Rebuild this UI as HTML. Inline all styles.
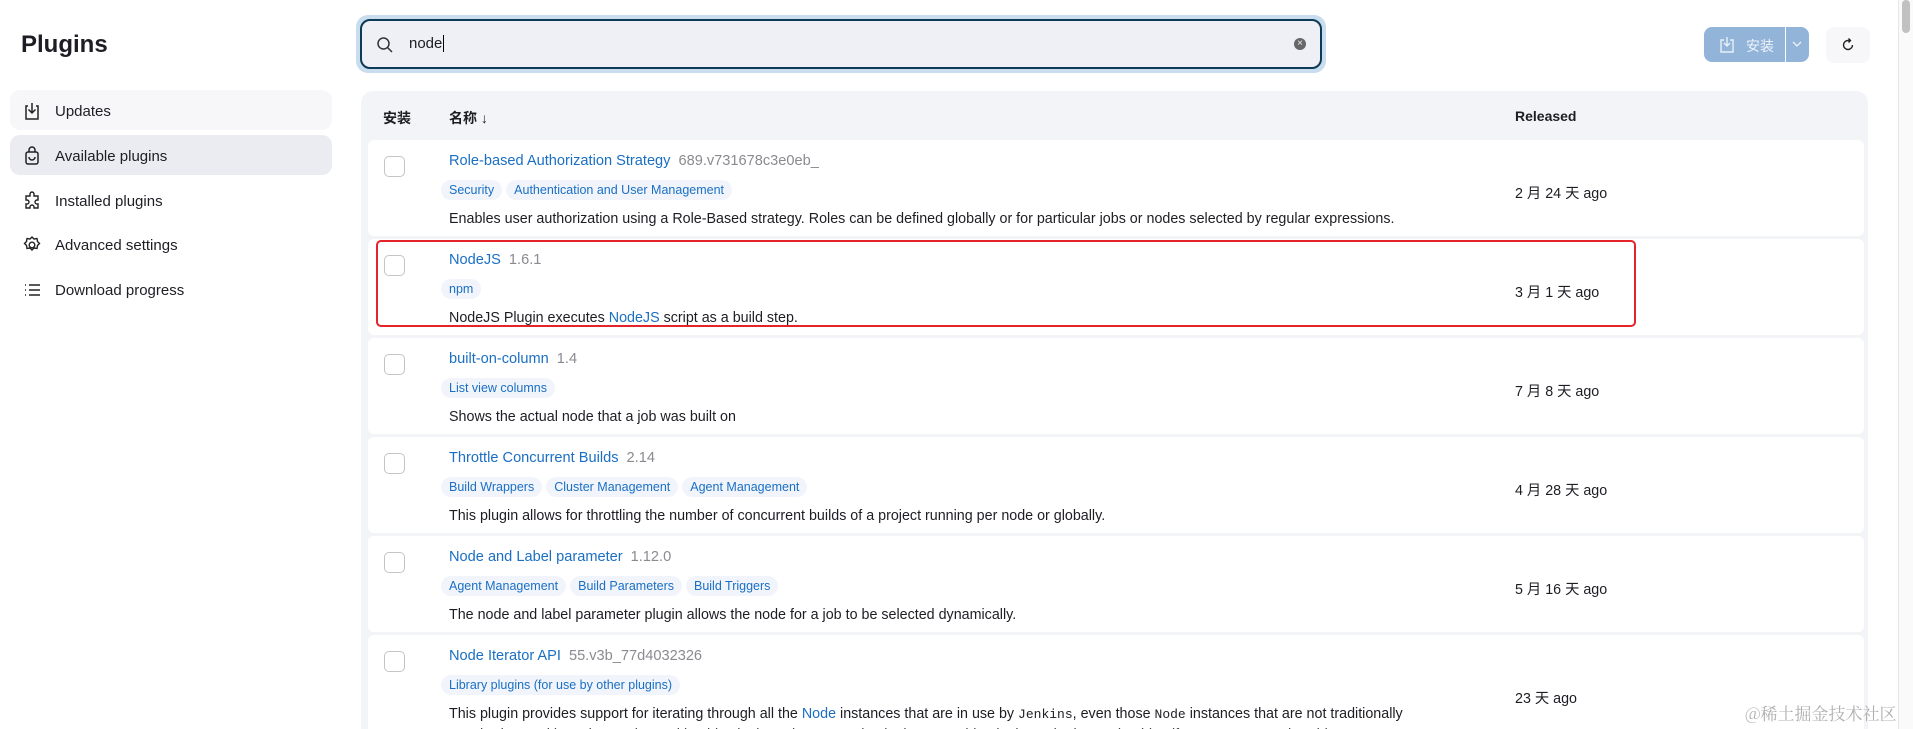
<!DOCTYPE html>
<html style="width:1913px;height:729px;overflow:hidden"><head><meta charset="utf-8"><style>
*{box-sizing:border-box;margin:0;padding:0}
body{width:1913px;height:729px;overflow:hidden;background:#fff;font-family:"Liberation Sans","Noto Sans CJK SC",sans-serif;color:#1d1d24;position:relative}
.a{position:absolute;white-space:nowrap}
.side{position:absolute;left:10px;width:322px;height:40px;border-radius:10px;font-size:15px;line-height:43px;padding-left:45px}
.side svg{position:absolute;left:12px;top:11px}
.row{position:absolute;left:368px;width:1496px;height:96px;background:#fff;border-radius:6px}
.cb{position:absolute;left:16px;width:21px;height:21px;border:1.6px solid #c4c4c8;border-radius:5px;background:#fff}
.t{position:absolute;left:81px;font-size:14.6px;color:#1a6fc4;white-space:nowrap}
.t span{color:#8a8a90;margin-left:8px}
.tags{position:absolute;left:73px;white-space:nowrap}
.tag{display:inline-block;font-size:12.5px;color:#1a6fc4;background:#f1f5fb;border-radius:12px;padding:3px 8px;margin-right:4px}
.d{position:absolute;left:81px;font-size:14.3px;white-space:nowrap}
.d b{font-weight:normal;color:#1a6fc4}
.r{position:absolute;left:1147px;font-size:14.3px;white-space:nowrap}
code{font-family:"Liberation Mono",monospace;font-size:13px}
</style></head><body>
<div class="a" style="left:21px;top:31px;font-size:24px;font-weight:bold">Plugins</div>

<div class="side" style="top:90px;background:#f7f7f9"><svg width="20" height="20" viewBox="0 0 20 20" fill="none" stroke="#222" stroke-width="1.5"><path d="M6 5H4v13h12V5h-2"/><path d="M10 2v10M6.5 8.5 10 12l3.5-3.5"/></svg>Updates</div>
<div class="side" style="top:135px;background:#ebecf1"><svg width="20" height="20" viewBox="0 0 20 20" fill="none" stroke="#222" stroke-width="1.5"><rect x="4" y="6" width="12" height="12" rx="2"/><path d="M7 6V4a3 3 0 0 1 6 0v2M7 11a3 3 0 0 0 6 0"/></svg>Available plugins</div>
<div class="side" style="top:180px"><svg width="20" height="20" viewBox="0 0 20 20" fill="none" stroke="#222" stroke-width="1.4"><path d="M8 3a2 2 0 0 1 4 0v2h4v4h-1a2 2 0 0 0 0 4h1v4h-4v-1a2 2 0 0 0-4 0v1H4v-4h1a2 2 0 0 0 0-4H4V5h4z"/></svg>Installed plugins</div>
<div class="side" style="top:224px"><svg width="20" height="20" viewBox="0 0 20 20" fill="none" stroke="#222" stroke-width="1.4"><path d="M10 2l2 2 3-.5.5 3 2 2-2 2-.5 3-3-.5-2 2-2-2-3 .5-.5-3-2-2 2-2 .5-3 3 .5z"/><circle cx="10" cy="10" r="2.8"/></svg>Advanced settings</div>
<div class="side" style="top:269px"><svg width="20" height="20" viewBox="0 0 20 20" fill="none" stroke="#222" stroke-width="1.5"><path d="M7 5h11M7 10h11M7 15h11M3 5h1M3 10h1M3 15h1"/></svg>Download progress</div>

<div class="a" style="left:356px;top:15px;width:970px;height:58px;border-radius:12px;background:#c9ddef"></div>
<div class="a" style="left:360px;top:19px;width:962px;height:50px;border-radius:10px;border:2.5px solid #0d3a55;background:#eef0f6"></div>
<svg class="a" style="left:376px;top:36px" width="18" height="18" viewBox="0 0 18 18" fill="none" stroke="#333" stroke-width="1.5"><circle cx="7.5" cy="7.5" r="5.5"/><path d="M11.5 11.5 16 16"/></svg>
<div class="a" style="left:409px;top:35px;font-size:15px">node<span style="border-left:1px solid #000;margin-left:1px"></span></div>
<div class="a" style="left:1294px;top:38px;width:12px;height:12px;border-radius:50%;background:#666;color:#eee;font-size:10px;line-height:12px;text-align:center">×</div>

<div class="a" style="left:1704px;top:27px;width:81px;height:35px;background:#92b4d9;border-radius:8px 0 0 8px"></div>
<div class="a" style="left:1786px;top:27px;width:23px;height:35px;background:#92b4d9;border-radius:0 8px 8px 0"></div>
<svg class="a" style="left:1719px;top:36px" width="16" height="17" viewBox="0 0 16 17" fill="none" stroke="#e8f0f8" stroke-width="1.4"><path d="M5 4H2v12h12V4h-3M8 1v9M5 7l3 3 3-3"/></svg>
<div class="a" style="left:1746px;top:36px;font-size:14px;color:#eef3f9">安装</div>
<svg class="a" style="left:1792px;top:41px" width="10" height="6" viewBox="0 0 10 6" fill="none" stroke="#eef3f9" stroke-width="1.3"><path d="M1 1l4 4 4-4"/></svg>
<div class="a" style="left:1826px;top:27px;width:44px;height:36px;background:#f7f7fa;border-radius:8px"></div>
<svg class="a" style="left:1840px;top:37px" width="16" height="16" viewBox="0 0 16 16" fill="none" stroke="#222" stroke-width="1.4"><path d="M12.5 8A4.5 4.5 0 1 1 8 3.5h2M8.5 1.5 10.5 3.5 8.5 5.5"/></svg>

<div class="a" style="left:1898px;top:0;width:15px;height:729px;background:#fafafa;border-left:1px solid #e6e6e6"></div>
<div class="a" style="left:1902px;top:0;width:8px;height:33px;background:#c1c1c1;border-radius:4px"></div>

<div class="a" style="left:361px;top:91px;width:1507px;height:638px;background:#f3f4f7;border-radius:12px 12px 0 0"></div>
<div class="a" style="left:383px;top:108px;font-size:14px;font-weight:bold">安装</div>
<div class="a" style="left:449px;top:108px;font-size:14px;font-weight:bold">名称 ↓</div>
<div class="a" style="left:1515px;top:108px;font-size:14px;font-weight:bold">Released</div>

<div class="row" style="top:140px"><div class="cb" style="top:16px"></div>
<div class="t" style="top:13px">Role-based Authorization Strategy<span>689.v731678c3e0eb_</span></div>
<div class="tags" style="top:40px"><span class="tag">Security</span><span class="tag">Authentication and User Management</span></div>
<div class="d" style="top:71px">Enables user authorization using a Role-Based strategy. Roles can be defined globally or for particular jobs or nodes selected by regular expressions.</div>
<div class="r" style="top:42px">2 月 24 天 ago</div></div>

<div class="row" style="top:239px"><div class="cb" style="top:16px"></div>
<div class="t" style="top:13px">NodeJS<span>1.6.1</span></div>
<div class="tags" style="top:40px"><span class="tag">npm</span></div>
<div class="d" style="top:71px">NodeJS Plugin executes <b>NodeJS</b> script as a build step.</div>
<div class="r" style="top:42px">3 月 1 天 ago</div></div>

<div class="row" style="top:338px"><div class="cb" style="top:16px"></div>
<div class="t" style="top:13px">built-on-column<span>1.4</span></div>
<div class="tags" style="top:40px"><span class="tag">List view columns</span></div>
<div class="d" style="top:71px">Shows the actual node that a job was built on</div>
<div class="r" style="top:42px">7 月 8 天 ago</div></div>

<div class="row" style="top:437px"><div class="cb" style="top:16px"></div>
<div class="t" style="top:13px">Throttle Concurrent Builds<span>2.14</span></div>
<div class="tags" style="top:40px"><span class="tag">Build Wrappers</span><span class="tag">Cluster Management</span><span class="tag">Agent Management</span></div>
<div class="d" style="top:71px">This plugin allows for throttling the number of concurrent builds of a project running per node or globally.</div>
<div class="r" style="top:42px">4 月 28 天 ago</div></div>

<div class="row" style="top:536px"><div class="cb" style="top:16px"></div>
<div class="t" style="top:13px">Node and Label parameter<span>1.12.0</span></div>
<div class="tags" style="top:40px"><span class="tag">Agent Management</span><span class="tag">Build Parameters</span><span class="tag">Build Triggers</span></div>
<div class="d" style="top:71px">The node and label parameter plugin allows the node for a job to be selected dynamically.</div>
<div class="r" style="top:42px">5 月 16 天 ago</div></div>

<div class="row" style="top:635px;height:94px;border-radius:6px 6px 0 0"><div class="cb" style="top:16px"></div>
<div class="t" style="top:13px">Node Iterator API<span>55.v3b_77d4032326</span></div>
<div class="tags" style="top:40px"><span class="tag">Library plugins (for use by other plugins)</span></div>
<div class="d" style="top:71px">This plugin provides support for iterating through all the <b>Node</b> instances that are in use by <code>Jenkins</code>, even those <code>Node</code> instances that are not traditionally</div>
<div class="d" style="top:92px;color:#444">attached to Jenkins. The API is used by this plugin and some Node plugins to enable plugins to be iterated to identify uses, among other things.</div>
<div class="r" style="top:52px">23 天 ago</div></div>

<div class="a" style="left:376px;top:240px;width:1260px;height:87px;border:2.5px solid #e3242b;border-radius:5px"></div>
<div class="a" style="left:1745px;top:700px;font-size:17px;color:#b0b0b0;font-family:'Noto Serif CJK SC','Liberation Serif',serif">@稀土掘金技术社区</div>
</body></html>
